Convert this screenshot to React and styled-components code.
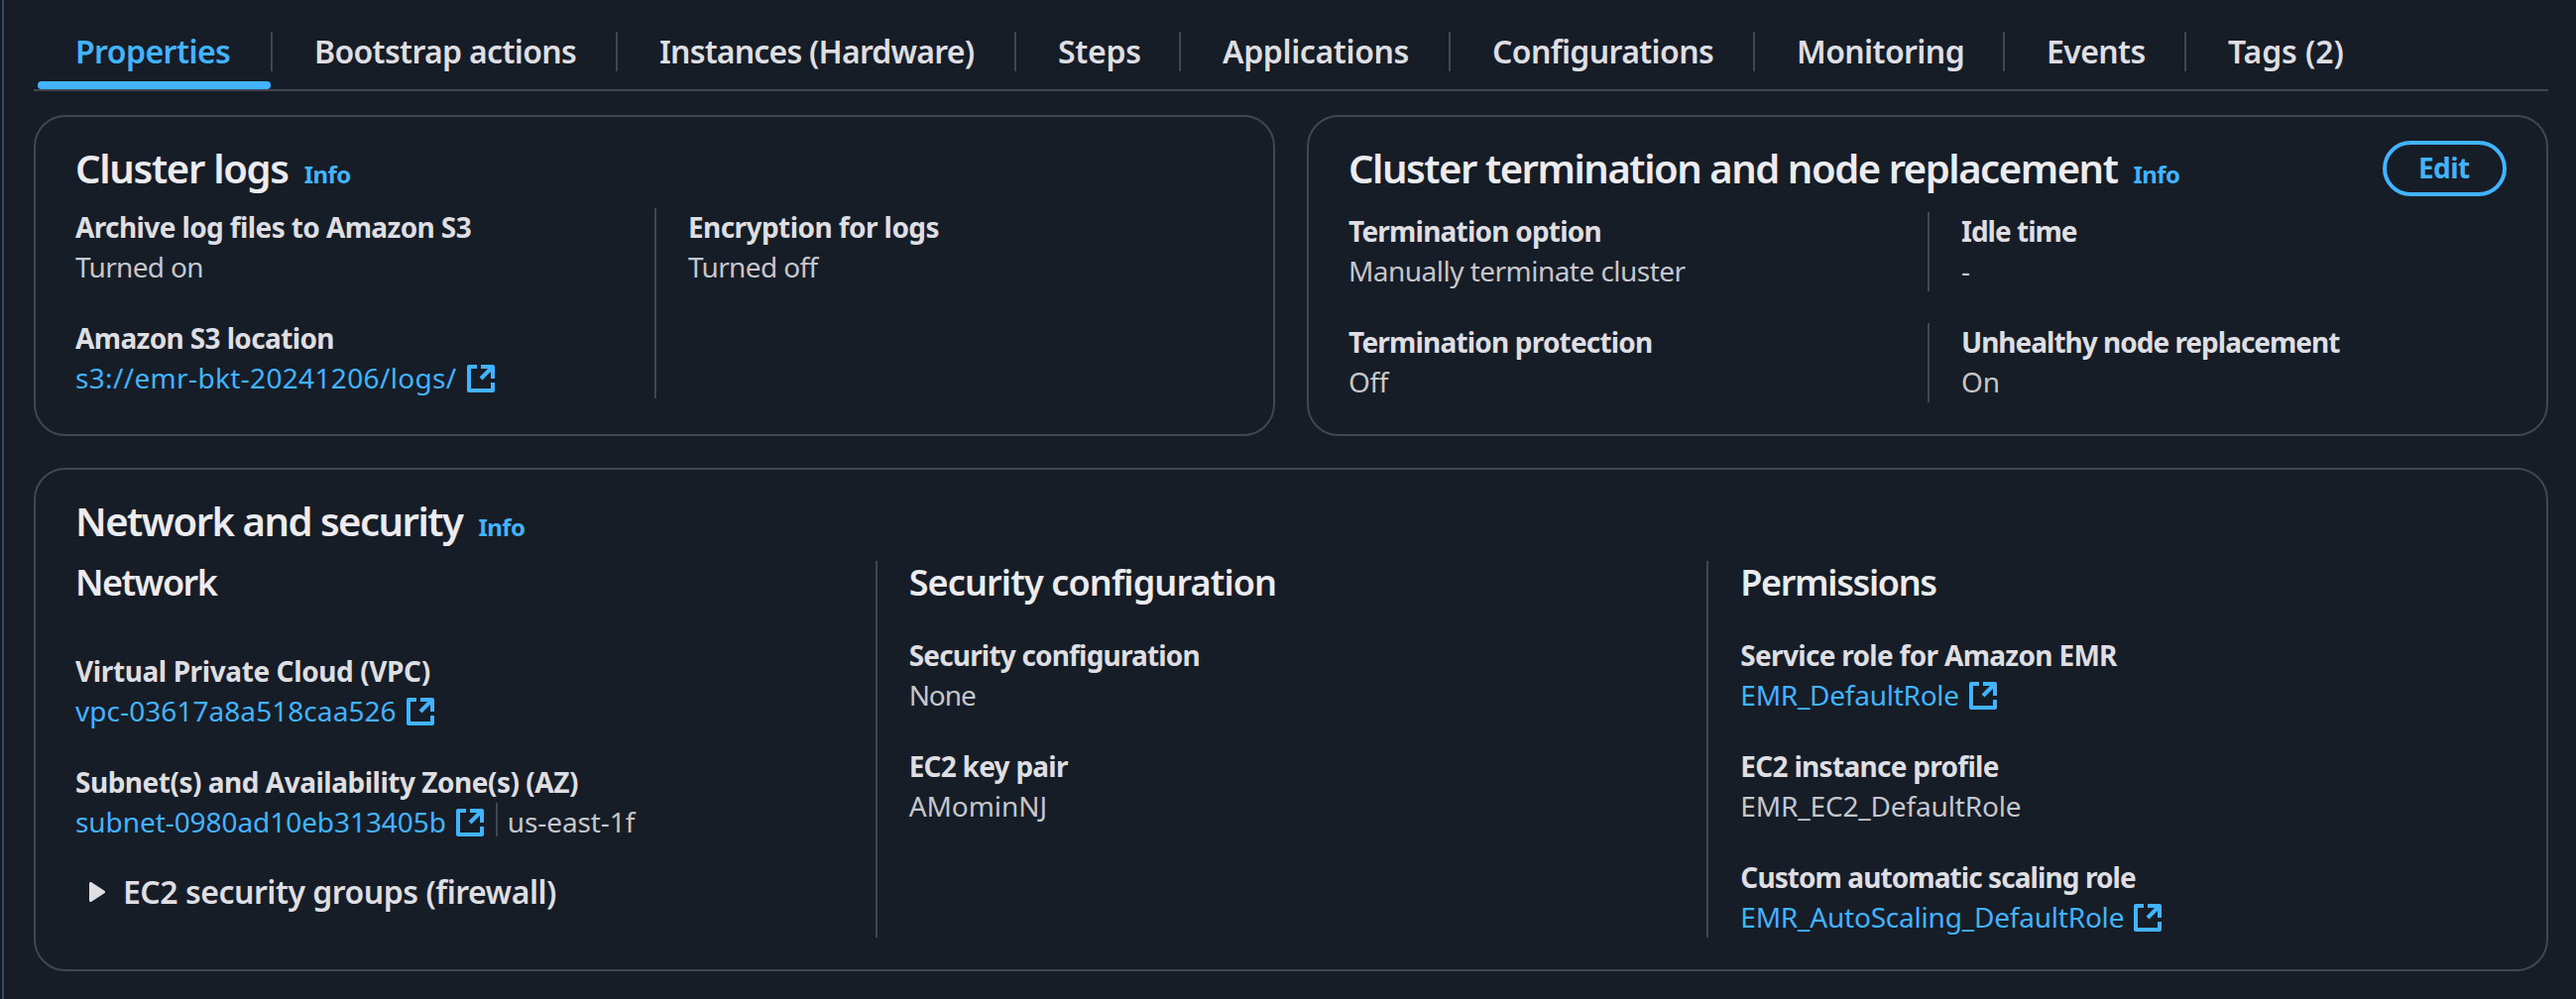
import React from 'react';
import styled, { createGlobalStyle, css } from 'styled-components';

const color = {
  page: '#161d26',
  edge: '#0a1a33',
  line: '#424650',
  link: '#42b4ff',
  heading: '#ebebf0',
  label: '#dedee3',
  value: '#c6c6cd',
};

const GlobalStyle = createGlobalStyle`
  *, *::before, *::after { box-sizing: border-box; }
  body {
    margin: 0;
    background: ${color.page};
    color: ${color.value};
    font-family: "Noto Sans", "Open Sans", sans-serif;
    font-size: 28px;
    line-height: 38px;
  }
  h2, h3, p { margin: 0; }
`;

const Page = styled.main`
  display: flex;
  flex-direction: column;
  height: 1008px;
  padding: 32px 28px 28px 30px;
  border-left: 2px solid ${color.line};
  overflow: hidden;
`;

const Frame = styled.div`
  padding-left: 2px;
  background: linear-gradient(to right, ${color.edge} 2px, ${color.page} 2px);
`;

const Text = styled.span`
  white-space: nowrap;
  letter-spacing: ${(p) => p.$track || 0}px;
`;

/* Tabs */

const TabList = styled.nav`
  display: grid;
  grid-template-columns: 237px 348px 402px 166px 272px 307px 252px 183px 1fr;
  height: 60px;
  padding-left: 4px;
  border-bottom: 2px solid ${color.line};
`;

const Tab = styled.a`
  height: 40px;
  padding-left: ${(p) => (p.$active ? 38 : 42)}px;
  border-right: 2px solid ${color.line};
  color: ${(p) => (p.$active ? color.link : color.label)};
  font-size: 32px;
  font-weight: 600;
  line-height: 39px;
  &:last-child { border-right: 0; }
  ${(p) =>
    p.$active &&
    css`
      &::after {
        content: '';
        display: block;
        width: 235px;
        height: 8px;
        margin: 11px 0 0 -38px;
        border-radius: 4px;
        background: ${color.link};
      }
    `}
`;

/* Cards */

const CardRow = styled.div`
  display: grid;
  grid-template-columns: 1fr 1fr;
  gap: 32px;
  height: 324px;
  margin: 24px 0 32px;
`;

const Card = styled.section`
  padding: 24px 40px 32px;
  border: 2px solid ${color.line};
  border-radius: 32px;
`;

const CardHeader = styled.header`
  display: flex;
  justify-content: space-between;
  height: ${(p) => (p.$action ? 56 : 52)}px;
  margin-bottom: 16px;
`;

const TitleGroup = styled.div`
  display: flex;
  align-items: baseline;
  gap: 16px;
  height: 49px;
  margin-top: 3px;
`;

const Title = styled.h2`
  color: ${color.heading};
  font-size: 40px;
  font-weight: 600;
  line-height: 49px;
`;

const InfoLink = styled.a`
  color: ${color.link};
  font-size: 24px;
  font-weight: 700;
`;

const EditButton = styled.button`
  width: 125px;
  height: 56px;
  padding: 4px 32px 6px;
  border: 4px solid ${color.link};
  border-radius: 28px;
  background: transparent;
  color: ${color.link};
  font: 700 28px/38px "Noto Sans", sans-serif;
  text-align: left;
`;

const Columns = styled.div`
  display: grid;
  grid-template-columns: repeat(${(p) => p.$count}, 1fr);
  margin: 0 -32px;
  & + & { margin-top: 32px; }
`;

const Column = styled.div`
  display: flex;
  flex-direction: column;
  gap: 32px;
  padding-left: 32px;
  & + & { border-left: 2px solid ${color.line}; }
`;

const ColumnTitle = styled.h3`
  height: 44px;
  margin-bottom: ${(p) => (p.$loose ? 16 : 0)}px;
  color: ${color.heading};
  font-size: 36px;
  font-weight: 600;
  line-height: 43px;
`;

/* Key / value pairs */

const Pair = styled.div`
  height: 80px;
`;

const Label = styled.p`
  height: 40px;
  color: ${color.label};
  font-weight: 700;
`;

const Value = styled.p`
  display: flex;
  height: 40px;
`;

const Link = styled.a`
  display: flex;
  gap: 8px;
  color: ${color.link};
`;

const Zone = styled.span`
  height: 34px;
  margin-left: 10px;
  padding-left: 10px;
  border-left: 2px solid ${color.line};
`;

const IconSvg = styled.svg`
  flex: none;
  margin-top: 4px;
`;

const Expander = styled.div`
  display: flex;
  gap: 18px;
  margin-top: -2px;
  padding-left: 14px;
  color: ${color.label};
  font-size: 32px;
  font-weight: 600;
  line-height: 39px;
`;

const Caret = styled.svg`
  flex: none;
  margin-top: 10px;
`;

const ExternalIcon = () => (
  <IconSvg width="32" height="32" viewBox="0 0 16 16" fill="none" stroke="currentColor" strokeWidth="2" strokeLinejoin="round">
    <path d="M6 2H2v12h12v-4" />
    <path d="M8 2h6v6" />
    <path d="M14 2 8 8" />
  </IconSvg>
);

const ExternalLink = ({ track, children }) => (
  <Link>
    <Text $track={track}>{children}</Text>
    <ExternalIcon />
  </Link>
);

const Field = ({ label, track, children }) => (
  <Pair>
    <Label><Text $track={track}>{label}</Text></Label>
    <Value>{children}</Value>
  </Pair>
);

const Header = ({ title, track, action }) => (
  <CardHeader $action={Boolean(action)}>
    <TitleGroup>
      <Title><Text $track={track}>{title}</Text></Title>
      <InfoLink><Text $track={-0.54}>Info</Text></InfoLink>
    </TitleGroup>
    {action}
  </CardHeader>
);

const tabs = [
  ['Properties', -0.56],
  ['Bootstrap actions', -0.66],
  ['Instances (Hardware)', -0.8],
  ['Steps', -0.3],
  ['Applications', -0.37],
  ['Configurations', -0.63],
  ['Monitoring', -0.6],
  ['Events', -0.6],
  ['Tags (2)', -0.1],
];

export default function App() {
  return (
    <Frame>
      <GlobalStyle />
      <Page>
        <TabList>
          {tabs.map(([name, track], i) => (
            <Tab key={name} $active={i === 0}><Text $track={track}>{name}</Text></Tab>
          ))}
        </TabList>

        <CardRow>
          <Card>
            <Header title="Cluster logs" track={-1.29} />
            <Columns $count={2}>
              <Column>
                <Field label="Archive log files to Amazon S3" track={-0.61}><Text $track={-0.67}>Turned on</Text></Field>
                <Field label="Amazon S3 location" track={-0.63}>
                  <ExternalLink track={0.34}>s3://emr-bkt-20241206/logs/</ExternalLink>
                </Field>
              </Column>
              <Column>
                <Field label="Encryption for logs" track={-0.57}><Text $track={-0.64}>Turned off</Text></Field>
              </Column>
            </Columns>
          </Card>

          <Card>
            <Header
              title="Cluster termination and node replacement"
              track={-1.45}
              action={<EditButton><Text $track={-0.58}>Edit</Text></EditButton>}
            />
            <Columns $count={2}>
              <Column>
                <Field label="Termination option" track={-0.78}><Text $track={-0.53}>Manually terminate cluster</Text></Field>
              </Column>
              <Column>
                <Field label="Idle time" track={-0.99}><Text>-</Text></Field>
              </Column>
            </Columns>
            <Columns $count={2}>
              <Column>
                <Field label="Termination protection" track={-0.81}><Text $track={-0.43}>Off</Text></Field>
              </Column>
              <Column>
                <Field label="Unhealthy node replacement" track={-1}><Text $track={-0.07}>On</Text></Field>
              </Column>
            </Columns>
          </Card>
        </CardRow>

        <Card>
          <Header title="Network and security" track={-1.5} />
          <Columns $count={3}>
            <Column>
              <ColumnTitle $loose><Text $track={-1.55}>Network</Text></ColumnTitle>
              <Field label="Virtual Private Cloud (VPC)" track={-0.4}>
                <ExternalLink track={0.06}>vpc-03617a8a518caa526</ExternalLink>
              </Field>
              <Field label="Subnet(s) and Availability Zone(s) (AZ)" track={-0.49}>
                <ExternalLink track={-0.07}>subnet-0980ad10eb313405b</ExternalLink>
                <Zone><Text $track={-0.11}>us-east-1f</Text></Zone>
              </Field>
              <Expander>
                <Caret width="16" height="20" viewBox="0 0 16 20" fill="currentColor" stroke="currentColor" strokeWidth="3" strokeLinejoin="round">
                  <path d="M1.5 1.5v17l13-8.5z" />
                </Caret>
                <Text $track={-0.49}>EC2 security groups (firewall)</Text>
              </Expander>
            </Column>
            <Column>
              <ColumnTitle><Text $track={-0.87}>Security configuration</Text></ColumnTitle>
              <Field label="Security configuration" track={-0.82}><Text $track={-1.07}>None</Text></Field>
              <Field label="EC2 key pair" track={-0.75}><Text $track={-0.07}>AMominNJ</Text></Field>
            </Column>
            <Column>
              <ColumnTitle><Text $track={-1.35}>Permissions</Text></ColumnTitle>
              <Field label="Service role for Amazon EMR" track={-0.69}>
                <ExternalLink track={-0.26}>EMR_DefaultRole</ExternalLink>
              </Field>
              <Field label="EC2 instance profile" track={-0.71}><Text $track={-0.16}>EMR_EC2_DefaultRole</Text></Field>
              <Field label="Custom automatic scaling role" track={-0.92}>
                <ExternalLink track={-0.21}>EMR_AutoScaling_DefaultRole</ExternalLink>
              </Field>
            </Column>
          </Columns>
        </Card>
      </Page>
    </Frame>
  );
}
